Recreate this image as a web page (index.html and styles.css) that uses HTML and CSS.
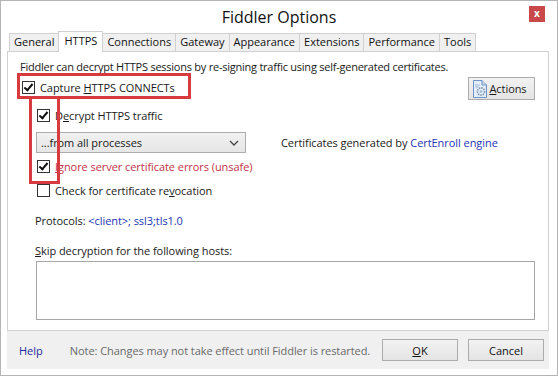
FILE: index.html
```html
<!DOCTYPE html>
<html>
<head>
<meta charset="utf-8">
<link rel="stylesheet" href="styles.css">
</head>
<body>
<div class="window">
  <div class="titlebar">
    <span class="title">Fiddler Options</span>
    <span class="close">x</span>
  </div>
  <div class="tabs">
    <span class="tab">General</span>
    <span class="tab active">HTTPS</span>
    <span class="tab">Connections</span>
    <span class="tab">Gateway</span>
    <span class="tab">Appearance</span>
    <span class="tab">Extensions</span>
    <span class="tab">Performance</span>
    <span class="tab">Tools</span>
  </div>
  <div class="panel">
    <div class="intro">Fiddler can decrypt HTTPS sessions by re-signing traffic using self-generated certificates.</div>
    <div class="row-top">
      <label class="check top-check"><span class="box on"></span><span>Capture <u>H</u>TTPS CONNECTs</span></label>
      <span class="btn actions">
        <svg class="act-icon" width="16" height="18" viewBox="0 0 16 18">
          <path d="M1.5 0.5 H10 L14.5 5 V17.5 H1.5 Z" fill="#e3eefa" stroke="#6f93c4"/>
          <path d="M10 0.5 V5 H14.5" fill="#c5d9f0" stroke="#6f93c4"/>
          <circle cx="9" cy="11.5" r="3.6" fill="none" stroke="#7a8fa8" stroke-width="1.6" stroke-dasharray="1.4 1"/>
          <circle cx="9" cy="11.5" r="1.3" fill="#9fb7d6"/>
          <path d="M3 5 H8 M3 7 H7" stroke="#9fb7d6"/>
        </svg><span><u>A</u>ctions</span>
      </span>
    </div>
    <label class="check sub first-sub"><span class="box on"></span><span>D<u>e</u>crypt HTTPS traffic</span></label>
    <div class="row-select">
      <span class="select">...from all processes
        <svg class="chev" width="10" height="6" viewBox="0 0 10 6"><path d="M1 1 L5 5 L9 1" fill="none" stroke="#444" stroke-width="1.3"/></svg>
      </span>
      <span class="certs">Certificates generated by <span class="link">CertEnroll engine</span></span>
    </div>
    <label class="check sub unsafe"><span class="box on"></span><span><u>I</u>gnore server certificate errors (unsafe)</span></label>
    <label class="check sub revoke"><span class="box"></span><span>Check for certificate re<u>v</u>ocation</span></label>
    <div class="protocols">Protocols: <span class="link">&lt;client&gt;; ssl3;tls1.0</span></div>
    <div class="skip"><u>S</u>kip decryption for the following hosts:</div>
    <div class="hosts"></div>
  </div>
  <div class="footer">
    <span class="help">Help</span>
    <span class="note">Note: Changes may not take effect until Fiddler is restarted.</span>
    <span class="btn fbtn ok"><u>O</u>K</span>
    <span class="btn fbtn">Cancel</span>
  </div>
</div>
<div class="mark mark-a"></div>
<div class="mark mark-b"></div>
</body>
</html>
```
FILE: styles.css
```css
html, body {
  margin: 0;
  padding: 0;
}
body {
  width: 558px;
  height: 376px;
  position: relative;
  overflow: hidden;
  font-family: "Open Sans", "Noto Sans", sans-serif;
  font-size: 11px;
  color: #1a1a1a;
  background: #fff;
}
.window {
  box-sizing: border-box;
  width: 558px;
  height: 376px;
  border: 1px solid #b4b4b4;
  background: #fff;
  display: flex;
  flex-direction: column;
}
.titlebar {
  height: 30px;
  position: relative;
  display: flex;
  align-items: center;
  justify-content: center;
}
.title {
  font-size: 16px;
  color: #111;
  margin-top: 1px;
}
.close {
  position: absolute;
  right: 12px;
  top: 5px;
  width: 16px;
  height: 16px;
  background: #c9494b;
  color: #fff;
  font-size: 10px;
  font-weight: bold;
  line-height: 15px;
  text-align: center;
}
.tabs {
  height: 20px;
  display: flex;
  align-items: flex-end;
  padding-left: 9px;
  position: relative;
  z-index: 1;
}
.tab {
  box-sizing: border-box;
  height: 18px;
  line-height: 16px;
  padding: 0 4px;
  border: 1px solid #d0d0d0;
  border-bottom: none;
  background: #f0f0f0;
  margin-left: -1px;
  color: #111;
}
.tab.active {
  height: 21px;
  margin-bottom: -1px;
  background: #fff;
  padding: 1px 5px 0;
  border-color: #d0d0d0;
  position: relative;
}
.panel {
  box-sizing: border-box;
  height: 280px;
  margin: 0 8px 0 6px;
  border: 1px solid #d0d0d0;
  background: #fff;
  display: flex;
  flex-direction: column;
  letter-spacing: -0.06px;
}
.intro {
  margin: 7px 0 0 12px;
  height: 16px;
  line-height: 16px;
  letter-spacing: -0.24px;
}
.row-top {
  margin-top: 1px;
  height: 24px;
  display: flex;
  justify-content: space-between;
  padding-right: 13px;
}
.check {
  display: flex;
  align-items: center;
  gap: 5px;
  height: 22px;
}
.top-check {
  margin-left: 14px;
}
.sub {
  margin-left: 29px;
}
.first-sub {
  margin-top: 4px;
}
.box {
  box-sizing: border-box;
  width: 13px;
  height: 13px;
  border: 1px solid #333;
  background: #fff;
  position: relative;
}
.box.on::after {
  content: "";
  position: absolute;
  left: 3px;
  top: 0px;
  width: 3px;
  height: 7px;
  border: solid #111;
  border-width: 0 2px 2px 0;
  transform: rotate(40deg);
}
.btn {
  box-sizing: border-box;
  border: 1px solid #acacac;
  background: linear-gradient(#f2f2f2, #e4e4e4);
  display: flex;
  align-items: center;
  justify-content: center;
}
.actions {
  align-self: flex-end;
  height: 23px;
  width: 67px;
  gap: 1px;
  padding-right: 4px;
}
.row-select {
  margin-top: 6px;
  height: 21px;
  display: flex;
  align-items: center;
  padding-left: 28px;
}
.select {
  box-sizing: border-box;
  width: 210px;
  height: 21px;
  border: 1px solid #acacac;
  background: linear-gradient(#f1f1f1, #e6e6e6);
  display: flex;
  align-items: center;
  justify-content: space-between;
  padding: 0 6px 0 4px;
}
.certs {
  margin-left: 35px;
}
.link {
  color: #2336b4;
}
.unsafe {
  margin-top: 2px;
  color: #c2334a;
}
.revoke {
  margin-top: 2px;
}
.protocols {
  margin: 9px 0 0 27px;
  height: 22px;
  line-height: 22px;
}
.skip {
  margin: 9px 0 0 27px;
  height: 20px;
  line-height: 20px;
}
.hosts {
  box-sizing: border-box;
  margin-left: 28px;
  width: 499px;
  height: 59px;
  border: 1px solid #a6a6a6;
  background: #fff;
}
.footer {
  box-sizing: border-box;
  height: 38px;
  margin: 0 8px 0 6px;
  background: #f0f0f0;
  display: flex;
  align-items: center;
  padding: 0 5px 0 12px;
}
.help {
  color: #1f2b9a;
}
.note {
  margin-left: 27px;
  color: #6a6a6a;
  letter-spacing: -0.06px;
}
.fbtn {
  width: 76px;
  height: 22px;
  color: #111;
}
.ok {
  margin-left: auto;
  margin-right: 10px;
}
.mark {
  position: absolute;
  box-sizing: border-box;
  border: 3px solid #d83b3f;
}
.mark-a {
  left: 17px;
  top: 73px;
  width: 174px;
  height: 26px;
}
.mark-b {
  left: 29px;
  top: 96px;
  width: 31px;
  height: 88px;
}
```
